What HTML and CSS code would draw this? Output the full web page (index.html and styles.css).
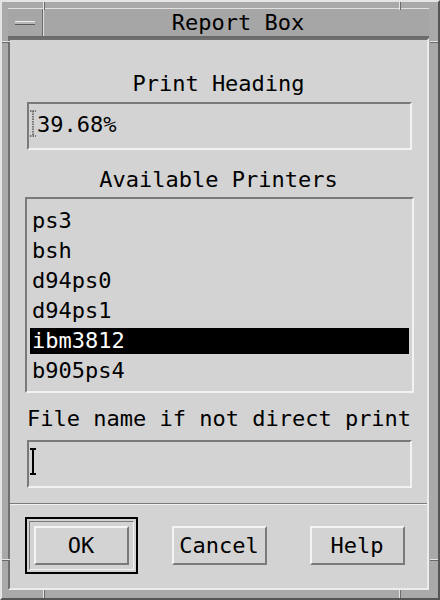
FILE: index.html
```html
<!DOCTYPE html>
<html lang="en">
<head>
  <meta charset="UTF-8">
  <meta name="viewport" content="width=device-width, initial-scale=1.0">
  <title>Report Box</title>
  <link rel="stylesheet" href="styles.css">
</head>
<body>

  <div class="window">
    <span class="tick tick-v" style="left: 41px; top: 0;"></span>
    <span class="tick tick-v" style="left: 397px; top: 0;"></span>
    <span class="tick tick-v" style="left: 41px; bottom: 0;"></span>
    <span class="tick tick-v" style="left: 397px; bottom: 0;"></span>
    <span class="tick tick-h" style="top: 39px; left: 0;"></span>
    <span class="tick tick-h" style="top: 557px; left: 0;"></span>
    <span class="tick tick-h" style="top: 39px; right: 0;"></span>
    <span class="tick tick-h" style="top: 557px; right: 0;"></span>

    <div class="titlebar">
      <div class="menu-btn"><span class="menu-bar"></span></div>
      <div class="title">Report Box</div>
    </div>

    <div class="client">
      <div class="label label-first">Print Heading</div>
      <div class="field">
        <svg class="cursor" width="8" height="27" viewBox="0 0 8 27">
          <path d="M1 1h6M1 26h6M4 1v25" stroke="#555" stroke-width="1.5" stroke-dasharray="1.5 1" fill="none"/>
        </svg>
        <span class="field-text">39.68%</span>
      </div>

      <div class="label label-list">Available Printers</div>
      <ul class="list">
        <li>ps3</li>
        <li>bsh</li>
        <li>d94ps0</li>
        <li>d94ps1</li>
        <li class="selected">ibm3812</li>
        <li>b905ps4</li>
      </ul>

      <div class="label label-left">File name if not direct print</div>
      <div class="field">
        <svg class="cursor" width="8" height="27" viewBox="0 0 8 27">
          <path d="M1 1h6M1 26h6M4 1v25" stroke="#000" stroke-width="2" fill="none"/>
        </svg>
        <span class="field-text"></span>
      </div>

      <div class="separator"></div>

      <div class="buttons">
        <div class="default-ring">
          <div class="default-inner">
            <button class="btn">OK</button>
          </div>
        </div>
        <button class="btn">Cancel</button>
        <button class="btn">Help</button>
      </div>
    </div>
  </div>

</body>
</html>
```

FILE: styles.css
```css
html, body {
  margin: 0;
  padding: 0;
}
body {
  width: 440px;
  height: 600px;
  overflow: hidden;
  font-family: "DejaVu Sans Mono", "Liberation Mono", monospace;
  font-size: 22px;
  line-height: 26px;
  color: #000;
}
.window {
  position: relative;
  box-sizing: border-box;
  width: 440px;
  height: 600px;
  display: flex;
  flex-direction: column;
  background-color: #a9a9a9;
  border: 2px solid;
  border-color: #e4e4e4 #555 #555 #e4e4e4;
  padding: 6px 9px 8px 6px;
}
.tick {
  position: absolute;
  background-color: #6a6a6a;
  border-color: #e4e4e4;
  border-style: solid;
}
.tick-v {
  width: 1px;
  height: 8px;
  border-width: 0 0 0 1px;
}
.tick-h {
  width: 8px;
  height: 1px;
  border-width: 1px 0 0 0;
}
.titlebar {
  display: flex;
  height: 30px;
  box-sizing: border-box;
  background-color: #a6a6a6;
  border-top: 1px solid #e0e0e0;
  border-bottom: 2px solid #6a6a6a;
}
.menu-btn {
  width: 34px;
  display: flex;
  align-items: center;
  justify-content: center;
  border-right: 1px solid #6a6a6a;
  box-shadow: 1px 0 0 #e0e0e0;
}
.menu-bar {
  width: 20px;
  height: 2px;
  margin-top: 1px;
  background-color: #b8b8b8;
  border-top: 1px solid #ececec;
  border-bottom: 1px solid #5a5a5a;
}
.title {
  flex: 1;
  text-align: center;
  padding-top: 1px;
  padding-left: 4px;
}
.client {
  flex: 1;
  display: flex;
  flex-direction: column;
  background-color: #d3d3d3;
  border: 2px solid;
  border-color: #6f6f6f #ececec #ececec #6f6f6f;
}
.label {
  text-align: center;
}
.label-first {
  margin-top: 31px;
}
.label-list {
  margin-top: 17px;
}
.label-left {
  text-align: left;
  margin: 13px 0 0 17px;
}
.field {
  position: relative;
  box-sizing: border-box;
  height: 48px;
  margin: 5px 15px 0 17px;
  padding: 8px 8px 0;
  border: 2px solid;
  border-color: #7a7a7a #f2f2f2 #f2f2f2 #7a7a7a;
}
.label-left + .field {
  margin-top: 8px;
}
.field-text {
  display: block;
  height: 26px;
}
.cursor {
  position: absolute;
  left: 0;
  top: 6px;
}
.list {
  list-style: none;
  box-sizing: border-box;
  height: 196px;
  margin: 4px 13px 0 15px;
  padding: 9px 3px 0;
  border: 2px solid;
  border-color: #7a7a7a #f2f2f2 #f2f2f2 #7a7a7a;
  display: flex;
  flex-direction: column;
  gap: 4px;
}
.list li {
  padding-left: 2px;
  height: 26px;
}
.list li.selected {
  background-color: #000;
  color: #fff;
}
.separator {
  margin-top: 15px;
  border-top: 1px solid #7a7a7a;
  border-bottom: 1px solid #f2f2f2;
}
.buttons {
  display: grid;
  grid-template-columns: repeat(3, 1fr);
  align-items: center;
  justify-items: center;
  margin-top: 12px;
  padding: 0 1px 0 2px;
}
.default-ring {
  border: 2px solid #000;
  padding: 2px;
}
.default-inner {
  border: 1px solid;
  border-color: #7a7a7a #f2f2f2 #f2f2f2 #7a7a7a;
  padding: 4px;
}
.btn {
  display: block;
  box-sizing: border-box;
  width: 95px;
  height: 39px;
  padding: 0;
  font-family: inherit;
  font-size: 22px;
  line-height: 26px;
  color: #000;
  background-color: #d3d3d3;
  border: 2px solid;
  border-color: #f4f4f4 #7a7a7a #7a7a7a #f4f4f4;
  border-radius: 0;
}
```
